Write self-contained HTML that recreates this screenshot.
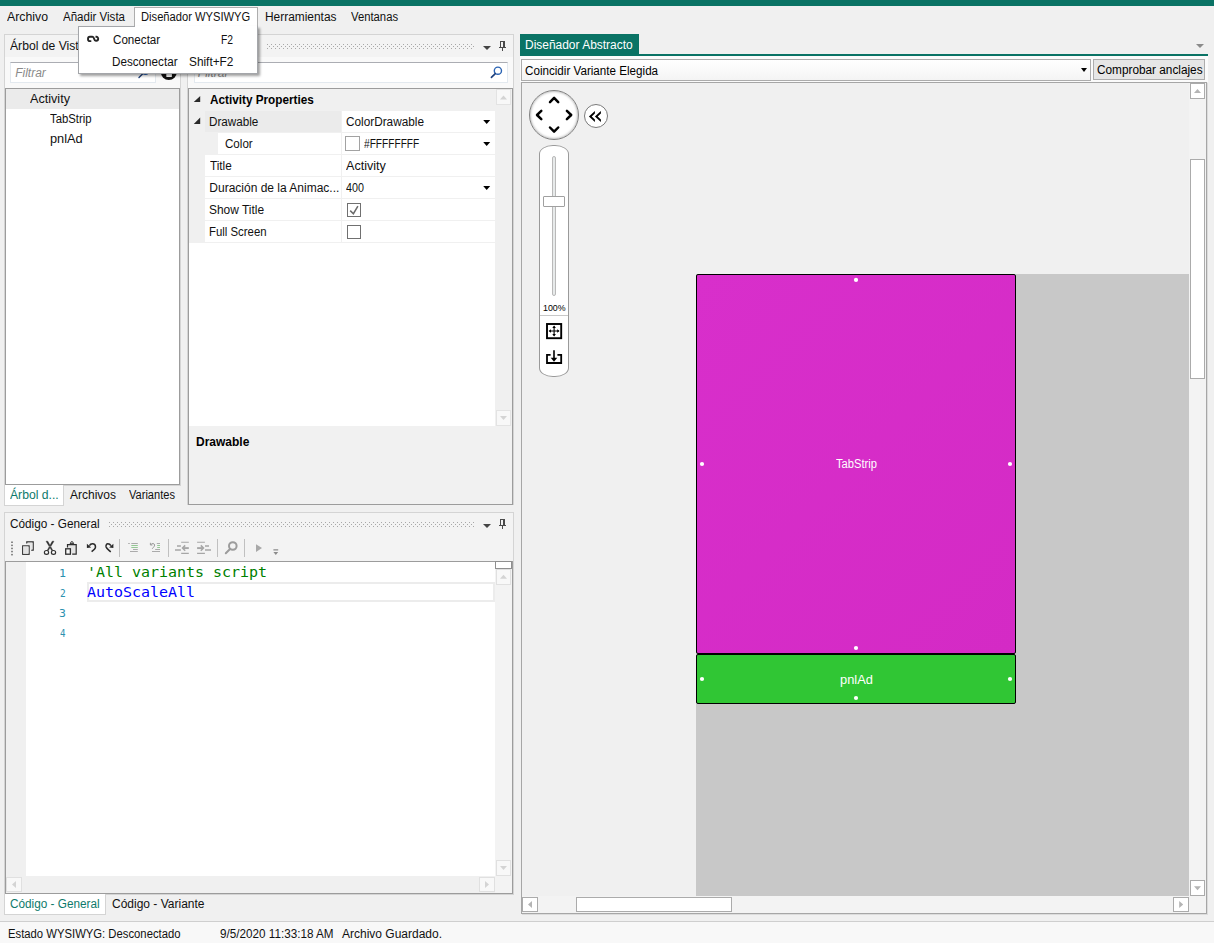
<!DOCTYPE html>
<html lang="es"><head><meta charset="utf-8"><title>Diseñador</title>
<style>
html,body{margin:0;padding:0;}
body{width:1214px;height:943px;background:#f0f0f0;position:relative;overflow:hidden;font-family:"Liberation Sans",sans-serif;font-size:12px;color:#1e1e1e;}
.a{position:absolute;box-sizing:border-box;}
.t{position:absolute;white-space:nowrap;line-height:1;display:inline-block;transform-origin:0 50%;}
.panel{background:#f3f3f3;border:1px solid #d4d4d4;}
.box{background:#fff;border:1px solid #9c9c9c;}
.grip{height:5px;background-image:radial-gradient(circle at 0.5px 0.5px,#a8a8a8 0.6px,transparent 0.7px),radial-gradient(circle at 0.5px 0.5px,#a8a8a8 0.6px,transparent 0.7px);background-size:4px 4px,4px 4px;background-position:0 0,2px 2px;}
.tri{width:0;height:0;border-left:4px solid transparent;border-right:4px solid transparent;border-top:4px solid #444;}
.row{left:205px;width:290px;height:21px;background:#fff;}
.sbtn{background:#fff;border:1px solid #ababab;}
</style></head>
<body>
<!-- title strip -->
<div class="a" style="left:0;top:0;width:1214px;height:6px;background:#0a7365"></div>

<!-- left panel: Arbol de Vistas -->
<div class="a panel" style="left:4px;top:34px;width:177px;height:452px"></div>
<div class="a" style="left:5px;top:57px;width:175px;height:31px;background:#f9f9f9"></div>
<div class="a" style="left:10px;top:62px;width:146px;height:21px;background:#fff;border:1px solid #e3e9ef;border-top-color:#abadb3"></div>
<div class="a box" style="left:5px;top:88px;width:175px;height:397px"></div>
<div class="a" style="left:6px;top:89px;width:173px;height:20px;background:#ebebeb"></div>
<!-- bottom tabs of left panel -->
<div class="a" style="left:4px;top:485px;width:60px;height:21px;background:#fff;border:1px solid #d4d4d4;border-top:none"></div>

<!-- properties panel -->
<div class="a panel" style="left:187px;top:34px;width:327px;height:471px;border-bottom:none"></div>
<div class="a grip" style="left:267px;top:44px;width:208px"></div>
<div class="a tri" style="left:483px;top:46px"></div>
<div class="a" style="left:188px;top:57px;width:325px;height:31px;background:#f9f9f9"></div>
<div class="a" style="left:194px;top:62px;width:314px;height:21px;background:#fff;border:1px solid #e3e9ef;border-top-color:#abadb3"></div>
<div class="a box" style="left:188px;top:88px;width:325px;height:417px;background:#f1f1f1"></div>
<div class="a" style="left:189px;top:89px;width:323px;height:337px;background:#fff"></div>
<div class="a" style="left:189px;top:89px;width:306px;height:154px;background:#f0f0f0"></div>
<div class="a" style="left:495px;top:89px;width:17px;height:337px;background:#f0f0f0"></div>
<div class="a row" style="top:111px;"></div>
<div class="a" style="left:205px;top:111px;width:137px;height:21px;background:#ebebeb"></div>
<div class="a row" style="top:133px;left:218px;width:277px"></div>
<div class="a row" style="top:155px;"></div>
<div class="a row" style="top:177px;"></div>
<div class="a row" style="top:199px;"></div>
<div class="a row" style="top:221px;"></div>
<div class="a" style="left:341px;top:111px;width:1px;height:132px;background:#f0f0f0"></div>

<!-- code panel -->
<div class="a panel" style="left:4px;top:512px;width:510px;height:383px"></div>
<div class="a grip" style="left:109px;top:522px;width:366px"></div>
<div class="a tri" style="left:483px;top:524px"></div>
<div class="a box" style="left:5px;top:561px;width:508px;height:333px"></div>
<div class="a" style="left:6px;top:562px;width:20px;height:314px;background:#f0f0f0"></div>
<div class="a" style="left:495px;top:562px;width:17px;height:331px;background:#f3f3f3"></div>
<div class="a" style="left:6px;top:876px;width:489px;height:17px;background:#f0f0f0"></div>
<div class="a" style="left:87px;top:582px;width:408px;height:20px;border:2px solid #ececec"></div>
<div class="a" style="left:4px;top:894px;width:102px;height:21px;background:#fff;border:1px solid #d4d4d4;border-top:none"></div>

<!-- status bar -->
<div class="a" style="left:0;top:921px;width:1214px;height:22px;background:#f8f8f8;border-top:1px solid #cfcfcf"></div>

<!-- designer -->
<div class="a" style="left:520px;top:34px;width:119px;height:22px;background:#0a7365"></div>
<div class="a" style="left:520px;top:54px;width:688px;height:2px;background:#0a7365"></div>
<div class="a" style="left:1196px;top:44px;border-left:4px solid transparent;border-right:4px solid transparent;border-top:4px solid #8a8a8a;width:0;height:0"></div>
<div class="a" style="left:520px;top:56px;width:688px;height:26px;background:#fbfbfb"></div>
<div class="a" style="left:521px;top:59px;width:570px;height:22px;background:linear-gradient(#fff,#f4f4f4);border:1px solid #acacac"></div>
<div class="a tri" style="left:1081px;top:68px;border-top-color:#000;border-left-width:3.5px;border-right-width:3.5px"></div>
<div class="a" style="left:1093px;top:59px;width:112px;height:21px;background:#e6e6e6;border:1px solid #adadad"></div>
<div class="a" style="left:521px;top:82px;width:686px;height:832px;background:#f0f0f0;border:1px solid #a6a6a6;box-shadow:1px 1px 0 #dcdcdc"></div>
<!-- gray area -->
<div class="a" style="left:696px;top:274px;width:493px;height:622px;background:#c8c8c8"></div>
<!-- scrollbars -->
<div class="a" style="left:1189px;top:83px;width:17px;height:830px;background:#f3f3f3"></div>
<div class="a" style="left:522px;top:896px;width:684px;height:17px;background:#f3f3f3"></div>
<div class="a sbtn" style="left:1190px;top:83px;width:15px;height:16px"></div>
<div class="a sbtn" style="left:1190px;top:159px;width:15px;height:220px"></div>
<div class="a sbtn" style="left:1190px;top:880px;width:15px;height:16px"></div>
<div class="a sbtn" style="left:522px;top:897px;width:16px;height:15px"></div>
<div class="a sbtn" style="left:576px;top:897px;width:156px;height:15px"></div>
<div class="a sbtn" style="left:1173px;top:897px;width:16px;height:15px"></div>
<!-- views -->
<div class="a" style="left:696px;top:274px;width:320px;height:380px;background:linear-gradient(135deg,#d82fcb,#d42ac5);border:1px solid #000;border-radius:2px"></div>
<div class="a" style="left:696px;top:654px;width:320px;height:50px;background:#30c634;border:1px solid #000;border-radius:2px"></div>
<!-- nav controls -->
<div class="a" style="left:529px;top:90px;width:50px;height:50px;border-radius:50%;background:#fff;border:1px solid #808080;box-shadow:inset 0 0 3px rgba(0,0,0,.45)"></div>
<div class="a" style="left:584px;top:104px;width:24px;height:24px;border-radius:50%;background:#fff;border:1px solid #7a7a7a"></div>
<div class="a" style="left:539px;top:145px;width:30px;height:232px;border-radius:14px/9px;background:#fff;border:1px solid #9a9a9a"></div>
<div class="a" style="left:552px;top:156px;width:4px;height:140px;border-radius:2px;background:#e7eaea;border:1px solid #b9b9b9"></div>
<div class="a" style="left:543px;top:196px;width:22px;height:11px;background:#fff;border:1px solid #a0a0a0;border-radius:1px"></div>
<div class="a" style="left:540px;top:315px;width:28px;height:1px;background:#c8c8c8"></div>

<!-- menu highlight + dropdown -->
<div class="a" style="z-index:5;left:134px;top:7px;width:124px;height:20px;background:#fff;border:1px solid #adadad;border-bottom:none"></div>
<div class="a" style="z-index:5;left:78px;top:26px;width:180px;height:48px;background:#fff;border:1px solid #a4a6aa;box-shadow:2px 2px 2.5px rgba(0,0,0,.38)"></div>
<div class="a" style="z-index:6;left:135px;top:26px;width:122px;height:1px;background:#fff"></div>
<svg class="a" style="left:0;top:0" width="1214" height="943" viewBox="0 0 1214 943" fill="none">
<!-- tree panel filter icons -->
<g stroke="#1d3f7c" stroke-width="1.4" stroke-linecap="round"><circle cx="145.5" cy="70.7" r="3.6" stroke="#2a63b3"/><path d="M143 73.6 L139 77.6"/></g>
<circle cx="168.8" cy="72" r="8" fill="#111"/>
<path d="M168.9 66.6 L174 71.8 H171.9 V76.6 Q171.9 77 171.5 77 H166.7 Q166.3 77 166.3 76.6 V71.8 H163.8 Z" fill="#fff"/>
<!-- properties filter search -->
<g stroke-width="1.4" stroke-linecap="round"><circle cx="497.9" cy="70.7" r="3.6" stroke="#2a63b3"/><path d="M495.3 73.6 L491.4 77.4" stroke="#1d3f7c" stroke-width="1.6"/></g>
<!-- pin icons -->
<g fill="#4a4a4a" shape-rendering="crispEdges"><rect x="500" y="41" width="5" height="1"/><rect x="500" y="41" width="1" height="6"/><rect x="503" y="41" width="2" height="6"/><rect x="499" y="47" width="7" height="1"/><rect x="502" y="48" width="1" height="3"/></g>
<g fill="#4a4a4a" shape-rendering="crispEdges" transform="translate(0,478)"><rect x="500" y="41" width="5" height="1"/><rect x="500" y="41" width="1" height="6"/><rect x="503" y="41" width="2" height="6"/><rect x="499" y="47" width="7" height="1"/><rect x="502" y="48" width="1" height="3"/></g>
<!-- expander triangles -->
<path d="M200.2 96 V102.1 H193.8 Z M200.2 117.6 V124.1 H193.8 Z" fill="#2a2a2a"/>
<!-- property dropdown arrows -->
<path d="M483.2 120 H490.2 L486.7 124 Z M483.2 142 H490.2 L486.7 146 Z M483.2 186 H490.2 L486.7 190 Z" fill="#000"/>
<!-- color swatch & checkboxes -->
<rect x="345.5" y="136.5" width="14" height="14" fill="#fff" stroke="#a2a2a2"/>
<rect x="347.5" y="203.5" width="13" height="13" fill="#fff" stroke="#707070"/>
<path d="M350.2 210.6 L353.4 213.7 L357.9 206.2" stroke="#6a6a6a" stroke-width="1.5"/>
<rect x="347.5" y="225.5" width="13" height="13" fill="#fff" stroke="#707070"/>
<!-- prop grid scroll buttons -->
<g fill="#f8f8f8" stroke="#e3e3e3"><rect x="496.5" y="89.5" width="14" height="15"/><rect x="496.5" y="410.5" width="14" height="15"/></g>
<path d="M500 99.5 H507 L503.5 95.5 Z M500 416 H507 L503.5 420 Z" fill="#d4d4d4"/>
<!-- code toolbar -->
<g fill="#8a8a8a"><rect x="11" y="541.5" width="2" height="1.5"/><rect x="11" y="544.6" width="2" height="1.5"/><rect x="11" y="547.7" width="2" height="1.5"/><rect x="11" y="550.8" width="2" height="1.5"/><rect x="11" y="553.9" width="2" height="1.5"/></g>
<g stroke="#2e2e2e" stroke-width="1.2">
 <path d="M26.8 543.6 V541.9 H33.2 V550.2 H31.2" fill="none"/>
 <path d="M27.6 542.7 H32.4 V549.4 H30.2 V544.8 H27.6 Z" fill="#e6e6e6" stroke="none"/>
 <rect x="22.7" y="545.9" width="6.4" height="8.4" fill="#e2e2e2"/>
 <rect x="23.6" y="546.8" width="4.6" height="6.6" fill="none" stroke="#f4f4f4" stroke-width="0.6"/>
 <!-- scissors -->
 <path d="M46 541.2 L47.8 541.2 L52.9 550.6 L52 551 Z M54 541.2 L52.2 541.2 L47.1 550.6 L48 551 Z" fill="#2e2e2e" stroke-width="0.4"/>
 <ellipse cx="46.5" cy="552.4" rx="2.1" ry="1.9" fill="#fafafa"/><ellipse cx="53.5" cy="552.4" rx="2.1" ry="1.9" fill="#fafafa"/>
 <!-- paste -->
 <path d="M67.5 547.6 V544.7 H76.2 V554.2 H72.2" fill="#e4e4e4"/>
 <path d="M69.6 544.6 L71.2 543 M74.2 544.6 L72.6 543" stroke-width="1.1"/><circle cx="71.9" cy="542.7" r="1.1" fill="#fafafa" stroke-width="1"/>
 <rect x="65.7" y="548.8" width="4.7" height="5.4" fill="#f6f6f6" stroke-width="1.3"/>
</g>
<!-- undo / redo -->
<g><path d="M86.9 543.8 V548 L91.2 547.6 Z" fill="#2a2a2a"/><path d="M89.4 545.7 C90.2 544.3 91.3 543.8 92.4 543.8 C94.3 543.8 95.5 545.2 95.5 546.9 C95.5 548.6 94 549.8 91.6 551.6" stroke="#2a2a2a" stroke-width="1.5"/></g>
<g transform="translate(200.3,0) scale(-1,1)"><path d="M86.9 543.8 V548 L91.2 547.6 Z" fill="#2a2a2a"/><path d="M89.4 545.7 C90.2 544.3 91.3 543.8 92.4 543.8 C93.9 543.8 94.6 545.4 94.2 547 C93.8 548.4 92 549.8 89.6 552" stroke="#2a2a2a" stroke-width="1.5"/></g>
<g fill="#c0c0c0"><rect x="119" y="539" width="1" height="18"/><rect x="168" y="539" width="1" height="18"/><rect x="217" y="539" width="1" height="18"/><rect x="244" y="539" width="1" height="18"/></g>
<!-- comment / uncomment (disabled) -->
<g stroke="#ababab" stroke-width="1"><path d="M128.2 543.5 H129.8 M131.3 543.5 H137.8 M133 549.5 H137.8 M130 551.5 H137.8"/><path d="M131.3 545.5 H137.8 M131.3 547.5 H137.8" stroke="#94c894"/>
<path d="M156.8 543.5 H160 M155.2 549.5 H160 M152 551.5 H160"/><path d="M157.2 545.5 H160 M157.2 547.5 H160" stroke="#94c894"/><path d="M150.4 542.8 V545 H152.4 M151 544.6 C152 543 154.4 543.2 154.6 545 C154.7 546.4 153.4 547.2 152.2 548.8" stroke="#9a9a9a"/></g>
<!-- outdent / indent (disabled) -->
<g stroke="#a6a6a6" stroke-width="1.1"><path d="M181.2 542.3 H188.8 M181.2 553.4 H188.8"/><path d="M177 546 H180.9 M175 550 H180.9" stroke-width="1.6"/><path d="M183 548.1 H188.8" stroke-width="1.9"/><path d="M185.2 545.4 L182.5 548.1 L185.2 550.8" stroke-width="1.5"/>
<path d="M197.1 542.3 H204.9 M197.1 553.4 H204.9"/><path d="M205 546 H209 M205 550 H211" stroke-width="1.6"/><path d="M197.1 548.1 H203" stroke-width="1.9"/><path d="M200.8 545.4 L203.5 548.1 L200.8 550.8" stroke-width="1.5"/></g>
<!-- search (disabled) -->
<g stroke="#9c9c9c" stroke-width="2" stroke-linecap="round"><circle cx="232.8" cy="546" r="3.8"/><path d="M230 549 L225.8 553.2"/></g>
<!-- play + overflow -->
<path d="M256 544.2 L262 548.1 L256 552 Z" fill="#a8a8a8"/>
<path d="M273.4 549.3 H278.2 V550.4 H273.4 Z M273.4 552 H278.2 L275.8 555 Z" fill="#8c8c8c"/>
<!-- code scrollbars -->
<rect x="495.5" y="561.5" width="16" height="7" fill="#fff" stroke="#8f8f8f"/>
<g fill="#f8f8f8" stroke="#e0e0e0"><rect x="496.5" y="569.5" width="14" height="15"/><rect x="496.5" y="860.5" width="14" height="15"/><rect x="6.5" y="877.5" width="15" height="14"/><rect x="479.5" y="877.5" width="15" height="14"/></g>
<path d="M500 578.7 H507 L503.5 574.7 Z M500 866 H507 L503.5 870 Z M16 881 V888 L12 884.5 Z M485 881 V888 L489 884.5 Z" fill="#d4d4d4"/>
<!-- designer scrollbar arrows -->
<path d="M1194 93 H1201 L1197.5 89 Z M1194 886.3 H1201 L1197.5 890.3 Z M532 901 V908 L528 904.5 Z M1179.2 901 V908 L1183.2 904.5 Z" fill="#b4b4b4"/>
<!-- nav chevrons -->
<g stroke="#000" stroke-width="2.5" stroke-linecap="round" stroke-linejoin="round">
<path d="M550 102.1 L554.1 97.9 L558.2 102.1"/><path d="M550 127.5 L554.1 131.7 L558.2 127.5"/>
<path d="M541.3 110.8 L537 115 L541.3 119.2"/><path d="M566.9 110.8 L571.2 115 L566.9 119.2"/></g>
<path d="M588.9 116.4 L594.9 111 V113.4 L591.7 116.4 L594.9 119.6 V122 Z M594.9 116.4 L600.9 111 V113.4 L597.7 116.4 L600.9 119.6 V122 Z" fill="#000"/>
<!-- fit icon -->
<rect x="547" y="324" width="14.2" height="14.2" stroke="#000" stroke-width="1.9"/>
<path d="M549.5 331 H558.7 M554.1 326.4 V335.6" stroke="#000" stroke-width="1.1"/>
<path d="M548.6 331 L551 329.2 V332.8 Z M559.6 331 L557.2 329.2 V332.8 Z M554.1 325.5 L552.3 327.9 H555.9 Z M554.1 336.5 L552.3 334.1 H555.9 Z" fill="#000"/>
<!-- download tray -->
<path d="M550.6 354.8 H547 V363 H561.2 V354.8 H557.4" stroke="#000" stroke-width="1.8"/>
<path d="M554 350.3 V358.5" stroke="#000" stroke-width="1.6"/><path d="M550.7 357.8 H557.3 L554 361.8 Z" fill="#000"/>
<!-- handles -->
<g fill="#fff"><circle cx="856" cy="279.9" r="2.1"/><circle cx="702" cy="464" r="2.1"/><circle cx="1010" cy="464" r="2.1"/><circle cx="856" cy="648" r="2.1"/>
<circle cx="702" cy="679" r="2.1"/><circle cx="1010" cy="679" r="2.1"/><circle cx="856" cy="698" r="2.1"/></g>
</svg>
<svg class="a" style="left:86px;top:35px;z-index:7" width="15" height="8" viewBox="0 0 15 8" fill="none"><path d="M5.3 6.1 H3.9 A1.9 2.2 0 0 1 3.9 1.7 H6.4 C8.8 1.7 7.4 5.8 9.8 5.8 H10.3 A1.9 2.05 0 0 0 10.3 1.7 H9.5" stroke="#262626" stroke-width="1.9"/></svg>

<span class="t" style="left:7.00px;top:11.0px;font-size:12px;color:#111;transform:scaleX(1.0250);">Archivo</span>
<span class="t" style="left:63.00px;top:11.0px;font-size:12px;color:#111;transform:scaleX(0.9615);">Añadir Vista</span>
<span class="t" style="left:140.57px;top:11.0px;font-size:12px;color:#111;transform:scaleX(0.9310);z-index:7;">Diseñador WYSIWYG</span>
<span class="t" style="left:264.51px;top:11.0px;font-size:12px;color:#111;transform:scaleX(0.9930);">Herramientas</span>
<span class="t" style="left:351.00px;top:11.0px;font-size:12px;color:#111;transform:scaleX(0.9400);">Ventanas</span>
<span class="t" style="left:10.00px;top:39.5px;font-size:12px;color:#111;transform:scaleX(1.0125);">Árbol de Vistas</span>
<span class="t" style="left:15.20px;top:66.5px;font-size:12px;color:#8a8a8a;font-style:italic;">Filtrar</span>
<span class="t" style="left:30.00px;top:93.0px;font-size:12px;color:#111;transform:scaleX(1.0526);">Activity</span>
<span class="t" style="left:50.00px;top:113.0px;font-size:12px;color:#111;transform:scaleX(0.9432);">TabStrip</span>
<span class="t" style="left:50.00px;top:133.0px;font-size:12px;color:#111;transform:scaleX(1.0667);">pnlAd</span>
<span class="t" style="left:10.00px;top:489.0px;font-size:12px;color:#0e7a6b;transform:scaleX(1.0149);">Árbol d...</span>
<span class="t" style="left:70.00px;top:489.0px;font-size:12px;color:#111;">Archivos</span>
<span class="t" style="left:128.50px;top:489.0px;font-size:12px;color:#111;transform:scaleX(0.9220);">Variantes</span>
<span class="t" style="left:197.80px;top:66.5px;font-size:12px;color:#8a8a8a;font-style:italic;">Filtrar</span>
<span class="t" style="left:210.30px;top:94.0px;font-size:12px;color:#000;transform:scaleX(0.9783);font-weight:bold;">Activity Properties</span>
<span class="t" style="left:209.33px;top:116.0px;font-size:12px;color:#111;transform:scaleX(0.9740);">Drawable</span>
<span class="t" style="left:346.10px;top:116.0px;font-size:12px;color:#111;transform:scaleX(0.9823);">ColorDrawable</span>
<span class="t" style="left:224.80px;top:138.0px;font-size:12px;color:#111;transform:scaleX(0.9655);">Color</span>
<span class="t" style="left:364.00px;top:138.0px;font-size:12px;color:#111;transform:scaleX(0.8462);">#FFFFFFFF</span>
<span class="t" style="left:210.30px;top:160.0px;font-size:12px;color:#111;transform:scaleX(0.9773);">Title</span>
<span class="t" style="left:346.10px;top:160.0px;font-size:12px;color:#111;transform:scaleX(1.0500);">Activity</span>
<span class="t" style="left:209.30px;top:182.0px;font-size:12px;color:#111;">Duración de la Animac...</span>
<span class="t" style="left:346.10px;top:182.0px;font-size:12px;color:#111;transform:scaleX(0.8950);">400</span>
<span class="t" style="left:209.31px;top:204.0px;font-size:12px;color:#111;transform:scaleX(0.9944);">Show Title</span>
<span class="t" style="left:209.35px;top:226.0px;font-size:12px;color:#111;transform:scaleX(0.9492);">Full Screen</span>
<span class="t" style="left:196.00px;top:436.0px;font-size:12px;color:#000;font-weight:bold;">Drawable</span>
<span class="t" style="left:10.40px;top:517.5px;font-size:12px;color:#111;transform:scaleX(0.9802);">Código - General</span>
<span class="t" style="left:10.40px;top:898.0px;font-size:12px;color:#0e7a6b;transform:scaleX(0.9802);">Código - General</span>
<span class="t" style="left:112.00px;top:898.0px;font-size:12px;color:#111;">Código - Variante</span>
<span class="t" style="left:7.56px;top:928.0px;font-size:12px;color:#111;transform:scaleX(0.9407);">Estado WYSIWYG: Desconectado</span>
<span class="t" style="left:220.00px;top:928.0px;font-size:12px;color:#111;transform:scaleX(0.9741);">9/5/2020 11:33:18 AM</span>
<span class="t" style="left:342.00px;top:928.0px;font-size:12px;color:#111;">Archivo Guardado.</span>
<span class="t" style="left:525.40px;top:39.0px;font-size:12px;color:#fff;transform:scaleX(0.9963);">Diseñador Abstracto</span>
<span class="t" style="left:525.40px;top:65.0px;font-size:12px;color:#000;transform:scaleX(0.9701);">Coincidir Variante Elegida</span>
<span class="t" style="left:1096.60px;top:64.0px;font-size:12px;color:#000;transform:scaleX(0.9832);">Comprobar anclajes</span>
<span class="t" style="left:835.70px;top:458.0px;font-size:12px;color:#fff;transform:scaleX(0.9295);">TabStrip</span>
<span class="t" style="left:840.10px;top:674.0px;font-size:12px;color:#fff;transform:scaleX(1.0700);">pnlAd</span>
<span class="t" style="left:542.67px;top:302.8px;font-size:9.5px;color:#000;transform:scaleX(0.9304);">100%</span>
<span class="t" style="left:112.50px;top:34.0px;font-size:12px;color:#111;transform:scaleX(0.9694);z-index:7;">Conectar</span>
<span class="t" style="left:220.94px;top:34.0px;font-size:12px;color:#111;transform:scaleX(0.8615);z-index:7;">F2</span>
<span class="t" style="left:111.53px;top:56.0px;font-size:12px;color:#111;transform:scaleX(0.9727);z-index:7;">Desconectar</span>
<span class="t" style="left:188.61px;top:56.0px;font-size:12px;color:#111;transform:scaleX(0.9864);z-index:7;">Shift+F2</span>
<span class="t" style="left:87.00px;top:565.2px;font-size:14px;color:#008000;transform:scaleX(1.0680);font-family:'DejaVu Sans Mono','Liberation Mono',monospace;">'All variants script</span>
<span class="t" style="left:87.00px;top:585.2px;font-size:14px;color:#0000ff;transform:scaleX(1.0680);font-family:'DejaVu Sans Mono','Liberation Mono',monospace;">AutoScaleAll</span>
<span class="t" style="left:58.94px;top:567.7px;font-size:11px;color:#2b91af;transform:scaleX(1.0600);font-family:'DejaVu Sans Mono','Liberation Mono',monospace;">1</span>
<span class="t" style="left:60.00px;top:587.7px;font-size:11px;color:#2b91af;transform:scaleX(0.8667);font-family:'DejaVu Sans Mono','Liberation Mono',monospace;">2</span>
<span class="t" style="left:58.96px;top:607.7px;font-size:11px;color:#2b91af;transform:scaleX(1.0400);font-family:'DejaVu Sans Mono','Liberation Mono',monospace;">3</span>
<span class="t" style="left:59.60px;top:627.7px;font-size:11px;color:#2b91af;transform:scaleX(0.8286);font-family:'DejaVu Sans Mono','Liberation Mono',monospace;">4</span>
</body></html>
